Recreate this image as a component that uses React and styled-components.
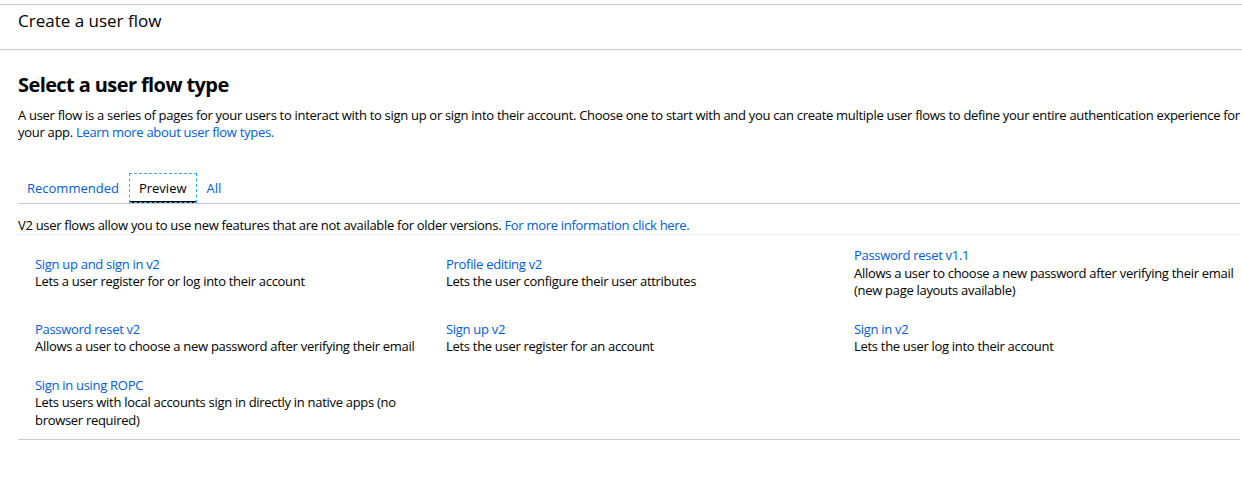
import styled, { createGlobalStyle } from "styled-components";

const GlobalStyle = createGlobalStyle`
  body {
    margin: 0;
    background: #ffffff;
    font-family: "Segoe UI", "Open Sans", "Liberation Sans", sans-serif;
    color: #000000;
    letter-spacing: -0.3px;
  }
`;

const Page = styled.div`
  width: 1242px;
  padding-top: 4px;
`;

const Header = styled.div`
  border-top: 1px solid #c8c8c8;
  border-bottom: 1px solid #c8c8c8;
  height: 46px;
  padding-left: 18px;
  box-sizing: border-box;
`;

const PageTitle = styled.h1`
  margin: 0;
  padding-top: 4px;
  font-size: 17px;
  font-weight: 400;
  line-height: 24px;
  letter-spacing: 0;
`;

const Body = styled.div`
  padding: 0 2px 0 18px;
`;

const SectionTitle = styled.h2`
  margin: 21px 0 0;
  font-size: 20px;
  font-weight: 700;
  line-height: 28px;
  letter-spacing: -0.6px;
`;

const Text = styled.p`
  margin: 8px 0 0;
  font-size: 13px;
  line-height: 17px;
`;

const Link = styled.a`
  color: #015cda;
  text-decoration: none;
  cursor: pointer;
`;

const Tabs = styled.div`
  display: flex;
  align-items: flex-end;
  margin-top: 32px;
  padding-left: 0;
  border-bottom: 1px solid #c8c8c8;
`;

const Tab = styled.div`
  font-size: 13px;
  line-height: 30px;
  letter-spacing: 0;
  padding: 0 10px 0 ${(p) => (p.first ? "9px" : "10px")};
  color: ${(p) => (p.active ? "#000000" : "#015cda")};
  outline: ${(p) => (p.active ? "1px dashed #2ab0f0" : "none")};
  outline-offset: -1px;
  box-shadow: ${(p) => (p.active ? "inset 0 -2px 0 #000000" : "none")};
  cursor: pointer;
`;

const Info = styled.div`
  font-size: 13px;
  line-height: 17px;
  padding: 13px 0 0;
  border-bottom: 1px solid #ececec;
`;

const Grid = styled.div`
  display: grid;
  grid-template-columns: 411px 408px 1fr;
  align-items: center;
  padding: 1px 0 0 17px;
  border-bottom: 1px solid #c8c8c8;
`;

const Cell = styled.div`
  padding: 11px 0 10px;
  font-size: 13px;
  line-height: 17.5px;
`;

const CellTitle = styled(Link)`
  display: block;
`;

const CellDesc = styled.div``;

const flows = [
  ["Sign up and sign in v2", "Lets a user register for or log into their account"],
  ["Profile editing v2", "Lets the user configure their user attributes"],
  [
    "Password reset v1.1",
    "Allows a user to choose a new password after verifying their email (new page layouts available)",
  ],
  ["Password reset v2", "Allows a user to choose a new password after verifying their email"],
  ["Sign up v2", "Lets the user register for an account"],
  ["Sign in v2", "Lets the user log into their account"],
  [
    "Sign in using ROPC",
    "Lets users with local accounts sign in directly in native apps (no browser required)",
  ],
];

const App = () => {
  return (
    <Page>
      <GlobalStyle />
      <Header>
        <PageTitle>Create a user flow</PageTitle>
      </Header>
      <Body>
        <SectionTitle>Select a user flow type</SectionTitle>
        <Text>
          A user flow is a series of pages for your users to interact with to sign up or sign into
          their account. Choose one to start with and you can create multiple user flows to define
          your entire authentication experience for your app.{" "}
          <Link>Learn more about user flow types.</Link>
        </Text>
        <Tabs>
          <Tab first>Recommended</Tab>
          <Tab active>Preview</Tab>
          <Tab>All</Tab>
        </Tabs>
        <Info>
          V2 user flows allow you to use new features that are not available for older versions.{" "}
          <Link>For more information click here.</Link>
        </Info>
        <Grid>
          {flows.map(([title, desc]) => (
            <Cell key={title}>
              <CellTitle>{title}</CellTitle>
              <CellDesc>{desc}</CellDesc>
            </Cell>
          ))}
        </Grid>
      </Body>
    </Page>
  );
};

export default App;
